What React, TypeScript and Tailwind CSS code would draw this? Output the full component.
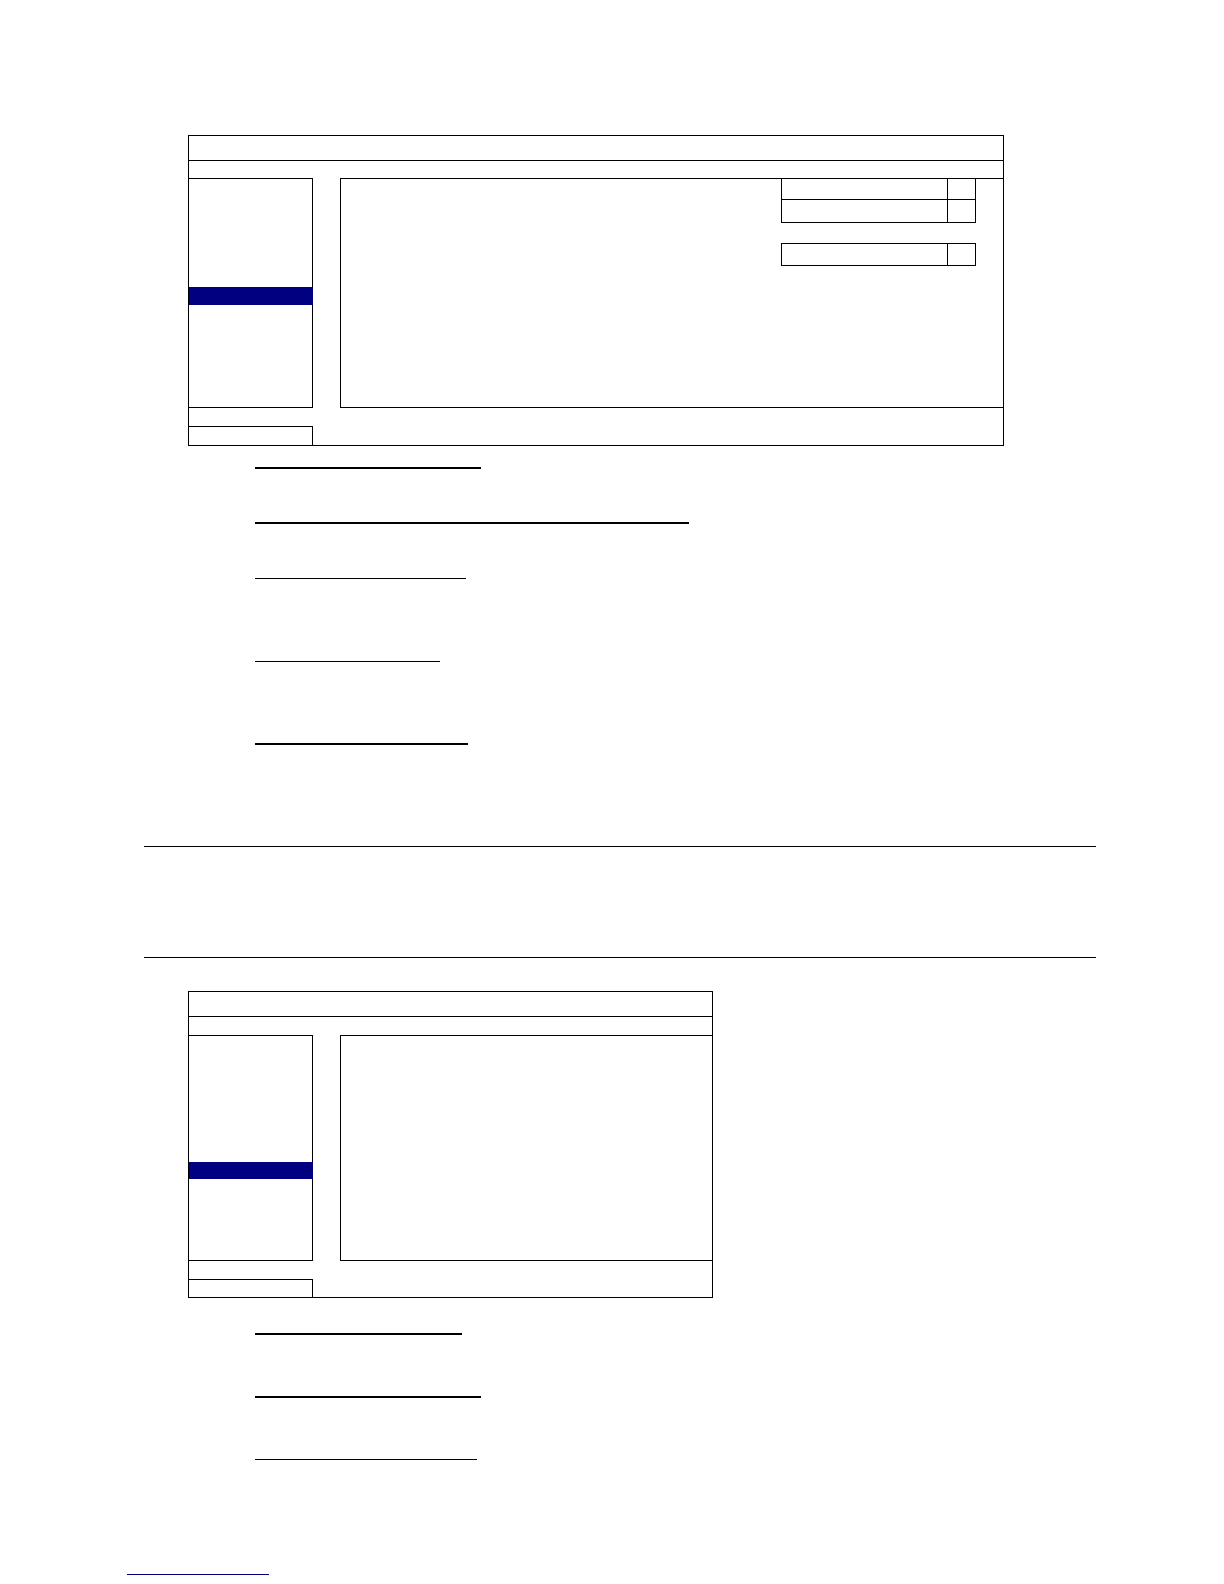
import React from "react";

function Sidebar({ height, blueTop, blueH }: { height: string; blueTop: string; blueH: string }) {
  return (
    <div className={`w-[124px] ${height} border-t border-b border-r border-black flex flex-col shrink-0`}>
      <div className={blueTop} />
      <div className={`${blueH} bg-[#000080] -mr-px`} />
    </div>
  );
}

function FieldRow({ last }: { last?: boolean }) {
  return (
    <div className={`flex h-[22px] ${last ? "" : "border-b border-black"}`}>
      <div className="flex-1" />
      <div className="w-[28px] border-l border-black" />
    </div>
  );
}

export default function App() {
  return (
    <div className="w-[1224px] h-[1584px] bg-white flex flex-col font-['Liberation_Sans',sans-serif] overflow-hidden">
      {/* Window 1 */}
      <div className="ml-[188px] mt-[135px] w-[816px] h-[311px] border border-black flex flex-col">
        <div className="h-[25px] border-b border-black" />
        <div className="h-[17px]" />
        <div className="flex h-[230px]">
          <Sidebar height="h-[230px]" blueTop="h-[108px]" blueH="h-[18px]" />
          <div className="ml-[27px] flex-1 border-l border-t border-b border-black flex flex-col items-end">
            <div className="mr-[27px] -mt-px w-[195px] border-l border-r border-b border-black flex flex-col">
              <FieldRow />
              <FieldRow last />
            </div>
            <div className="mr-[27px] mt-[20px] w-[195px] h-[23px] border border-black flex">
              <div className="flex-1" />
              <div className="w-[28px] border-l border-black" />
            </div>
          </div>
        </div>
        <div className="mt-[18px] w-[124px] h-[19px] border-t border-r border-black" />
      </div>

      <div className="ml-[255px] mt-[21px] w-[226px] h-[2px] bg-black" />
      <div className="ml-[255px] mt-[53px] w-[434px] h-[2px] bg-black" />
      <div className="ml-[255px] mt-[54px] w-[211px] h-px bg-black" />
      <div className="ml-[255px] mt-[82px] w-[185px] h-px bg-black" />
      <div className="ml-[255px] mt-[81px] w-[213px] h-[2px] bg-black" />

      <div className="ml-[144px] mt-[101px] w-[952px] h-px bg-black" />
      <div className="ml-[144px] mt-[110px] w-[952px] h-px bg-black" />

      {/* Window 2 */}
      <div className="ml-[188px] mt-[33px] w-[525px] h-[307px] border border-black flex flex-col">
        <div className="h-[25px] border-b border-black" />
        <div className="h-[18px]" />
        <div className="flex h-[226px]">
          <Sidebar height="h-[226px]" blueTop="h-[126px]" blueH="h-[17px]" />
          <div className="ml-[27px] flex-1 border-l border-t border-b border-black" />
        </div>
        <div className="mt-[18px] w-[124px] h-[18px] border-t border-r border-black" />
      </div>

      <div className="ml-[255px] mt-[35px] w-[207px] h-[2px] bg-black" />
      <div className="ml-[255px] mt-[61px] w-[226px] h-[2px] bg-black" />
      <div className="ml-[255px] mt-[61px] w-[222px] h-px bg-black" />

      <div className="ml-[127px] mt-[114px] w-[142px] h-px bg-[#000080]" />
    </div>
  );
}
